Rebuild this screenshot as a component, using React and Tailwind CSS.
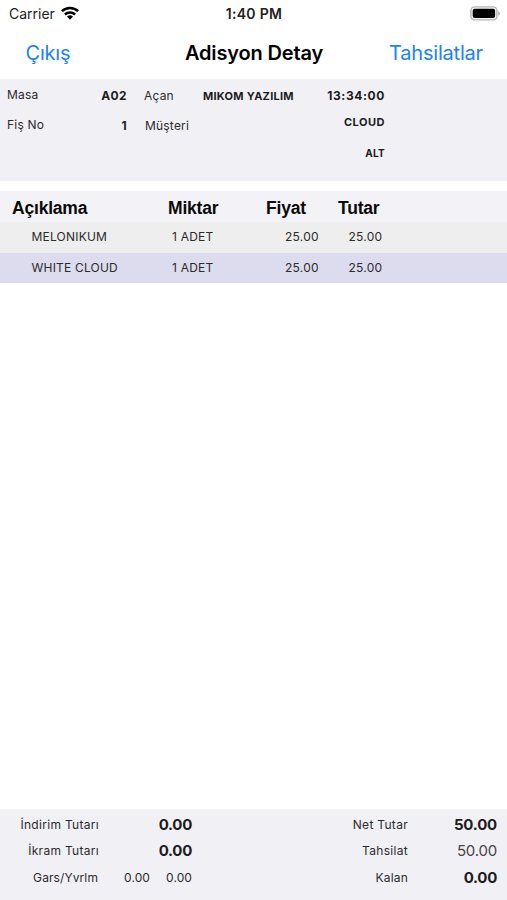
const items = [
  { name: 'MELONIKUM', amount: '1 ADET', price: '25.00', total: '25.00', tone: 'bg-[#eeeeee]' },
  { name: 'WHITE CLOUD', amount: '1 ADET', price: '25.00', total: '25.00', tone: 'bg-[#dddcef]' },
];

const discounts = [
  { label: 'İndirim Tutarı', value: '0.00' },
  { label: 'İkram Tutarı', value: '0.00' },
];

const WifiIcon = () => (
  <svg width="18" height="14" viewBox="0 0 18 14" fill="none" stroke="#000" strokeWidth="2.5" className="mb-0.5">
    <path d="M0.9 5.2a11.6 11.6 0 0 1 16.2 0" />
    <path d="M3.9 8.5a7.3 7.3 0 0 1 10.2 0" />
    <path d="M6 10.6a4.3 4.3 0 0 1 6 0L9 13.7z" fill="#000" stroke="none" />
  </svg>
);

const BatteryIcon = () => (
  <svg width="31" height="15" viewBox="0 0 31 15" fill="none" className="mb-px">
    <rect x="0.9" y="0.9" width="26" height="13" rx="3.6" fill="#f4f4f4" stroke="#b5b5b5" strokeWidth="1.4" />
    <rect x="2.7" y="2.7" width="22.4" height="9.4" rx="2" fill="#000" />
    <path d="M28.3 5.2c1.9.6 1.9 4 0 4.6z" fill="#a5a5a5" />
  </svg>
);

const StatusBar = () => (
  <div className="grid h-7 grid-cols-3 items-center text-sm text-[#222]">
    <div className="flex items-center gap-1.5 pl-[9px]">
      <span>Carrier</span>
      <WifiIcon />
    </div>
    <div className="pl-px text-center font-semibold tracking-[0.3px]">1:40 PM</div>
    <div className="flex justify-end pr-1.5">
      <BatteryIcon />
    </div>
  </div>
);

const NavBar = () => (
  <div className="flex h-[51px] items-center pb-0.5 text-xl text-[#1a82fb]">
    <button className="w-[119px] pl-[25.5px] text-left tracking-[-0.2px]">Çıkış</button>
    <h1 className="flex-1 text-center font-semibold tracking-[-0.15px] text-black">Adisyon Detay</h1>
    <button className="w-[118px] pr-[25px] text-right tracking-[-0.2px]">Tahsilatlar</button>
  </div>
);

const TicketInfo = () => (
  <section className="flex h-[102px] bg-[#f1f0f5] text-xs leading-[30px] text-[#2b2b2e]">
    <div className="w-[80px] pt-px pl-[7px] tracking-[0.2px]">
      <div>Masa</div>
      <div>Fiş No</div>
    </div>
    <div className="w-[47px] pt-0.5 text-right font-bold tracking-[0.4px] text-[#1c1c1e]">
      <div>A02</div>
      <div>1</div>
    </div>
    <div className="w-[75px] pt-0.5 pl-[17px] tracking-[0.2px]">
      <div>Açan</div>
      <div className="pl-px">Müşteri</div>
    </div>
    <div className="w-[100px] pt-0.5 pl-px text-[11px] font-bold tracking-[0.26px] text-[#1c1c1e]">
      MIKOM YAZILIM
    </div>
    <div className="flex w-[83px] flex-col pt-0.5 text-right font-bold text-[#1c1c1e]">
      <div className="tracking-[0.6px]">13:34:00</div>
      <div className="-mt-1 mb-px text-[11px] tracking-[0.5px]">CLOUD</div>
      <div className="text-[10px] tracking-[0.3px]">ALT</div>
    </div>
  </section>
);

const ItemTable = () => (
  <section>
    <div className="flex h-[31px] items-center bg-[#f3f2f6] pt-[3px] font-['Liberation_Sans',Arial,sans-serif] text-[17.5px] font-bold tracking-[-0.2px] text-[#0a0a0a]">
      <div className="w-[168px] pl-3">Açıklama</div>
      <div className="w-[98px]">Miktar</div>
      <div className="w-[72px]">Fiyat</div>
      <div>Tutar</div>
    </div>
    {items.map((item) => (
      <div key={item.name} className={`flex h-[30.5px] items-center text-xs text-[#2b2b2e] ${item.tone}`}>
        <div className="w-[172px] pl-[31.5px] tracking-[0.2px]">{item.name}</div>
        <div className="w-[80px] tracking-[0.2px]">{item.amount}</div>
        <div className="w-[67px] text-right tracking-[0.3px]">{item.price}</div>
        <div className="w-[63.5px] text-right tracking-[0.3px]">{item.total}</div>
      </div>
    ))}
  </section>
);

const Totals = () => (
  <footer className="flex h-[91px] justify-between bg-[#f1f0f5] pt-[3px] text-xs leading-[26px] text-[#2b2b2e]">
    <div className="w-[192px]">
      {discounts.map((row) => (
        <div key={row.label} className="flex">
          <div className="w-[99px] text-right tracking-[0.3px]">{row.label}</div>
          <div className="flex-1 text-right text-[15px] font-bold tracking-[-0.3px] text-[#1c1c1e]">{row.value}</div>
        </div>
      ))}
      <div className="flex pt-px">
        <div className="w-[98px] text-right tracking-[0.1px]">Gars/Yvrlm</div>
        <div className="w-[52px] text-right tracking-[0.1px]">0.00</div>
        <div className="flex-1 text-right tracking-[0.1px]">0.00</div>
      </div>
    </div>
    <div className="w-[167px] pr-2.5">
      <div className="flex">
        <div className="w-[68px] text-right tracking-[0.3px]">Net Tutar</div>
        <div className="flex-1 text-right text-[15px] font-bold tracking-[-0.2px] text-[#1c1c1e]">50.00</div>
      </div>
      <div className="flex">
        <div className="w-[68px] text-right tracking-[0.3px]">Tahsilat</div>
        <div className="flex-1 text-right text-[15px] tracking-[-0.2px] text-[#444447]">50.00</div>
      </div>
      <div className="flex pt-px">
        <div className="w-[68px] text-right tracking-[0.2px]">Kalan</div>
        <div className="flex-1 text-right text-[15px] font-bold tracking-[-0.3px] text-[#1c1c1e]">0.00</div>
      </div>
    </div>
  </footer>
);

export default function App() {
  return (
    <div className="flex h-screen flex-col overflow-hidden bg-white font-['Inter',sans-serif] whitespace-nowrap">
      <StatusBar />
      <NavBar />
      <TicketInfo />
      <div className="h-2.5" />
      <ItemTable />
      <div className="flex-1" />
      <Totals />
    </div>
  );
}
